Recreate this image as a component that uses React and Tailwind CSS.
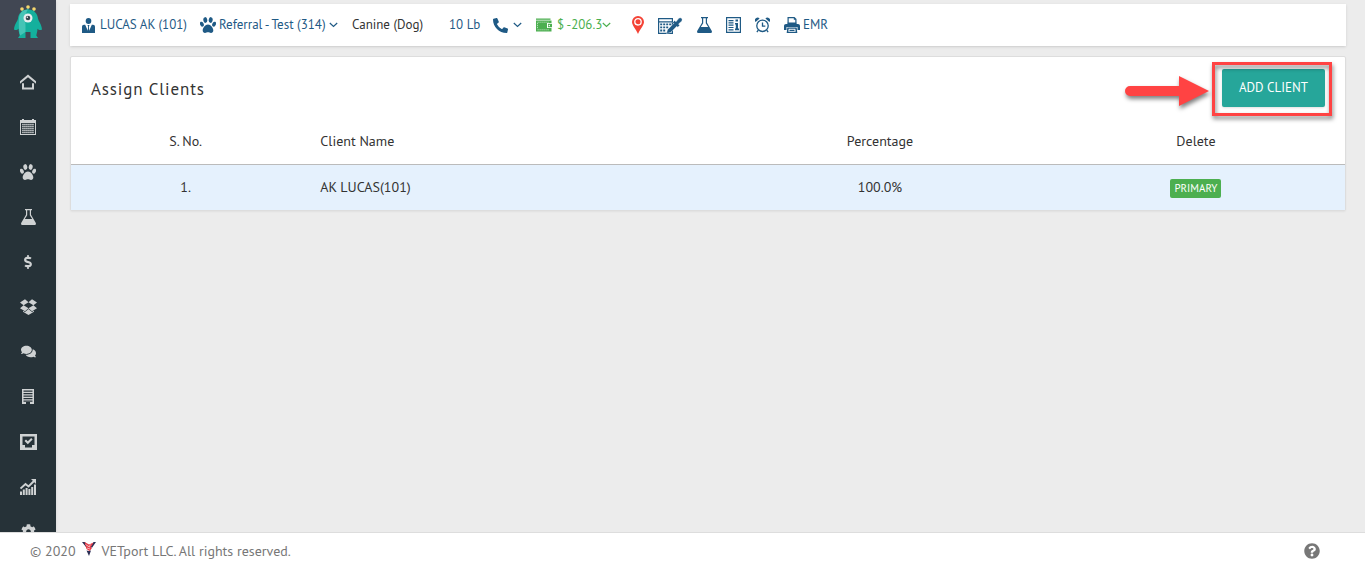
import {
  FaDollarSign,
  FaComments,
  FaCog,
  FaPhoneAlt,
  FaQuestionCircle,
} from "react-icons/fa";

const HomeIcon = () => (
  <svg width="16" height="16" viewBox="0 0 16 16" fill="currentColor">
    <path d="M8 0.5 0 7.3v2.5l8-6.500 8 6.500V7.300z" />
    <path d="M2 9.200h2v4.300h8V9.200h2v6.300H2z" />
  </svg>
);

const CalendarIcon = () => (
  <svg width="16" height="16" viewBox="0 0 16 16" fill="currentColor">
    <path
      fillRule="evenodd"
      d="M0 1h2V0h2v1h8V0h2v1h2v15H0zM1 4v11h14V4z"
    />
    {[5, 7, 9, 11, 13].map((y) =>
      [2, 4, 6, 8, 10, 12].map((x) => (
        <rect key={`${x}-${y}`} x={x + 0.2} y={y - 0.2} width="1.5" height="1.4" />
      )),
    )}
  </svg>
);

const PawIcon = () => (
  <svg width="16" height="16" viewBox="0 0 16 16" fill="currentColor">
    <ellipse cx="5.300" cy="3" rx="2" ry="2.900" transform="rotate(-8 5.300 3)" />
    <ellipse cx="10.700" cy="3" rx="2" ry="2.900" transform="rotate(8 10.700 3)" />
    <ellipse cx="1.900" cy="7.200" rx="1.800" ry="2.600" transform="rotate(-22 1.900 7.200)" />
    <ellipse cx="14.100" cy="7.200" rx="1.800" ry="2.600" transform="rotate(22 14.100 7.200)" />
    <path d="M8 7.500c2.700 0 5.300 3.400 5.300 6 0 1.600-1 2.400-2.300 2.400-1.200 0-1.800-.7-3-.7s-1.800.7-3 .7c-1.300 0-2.300-.8-2.300-2.400 0-2.600 2.600-6 5.300-6z" />
  </svg>
);

const DropboxIcon = () => (
  <svg width="17" height="16" viewBox="0 0 17 16" fill="currentColor">
    <path d="M5 .3 8.500 3.200 3.600 6.200 0 3.400zM12 .3 8.500 3.200l4.900 3L17 3.400zM0 9.200l3.600-2.900 4.900 3L5 12.200zM17 9.200l-3.600-2.900-4.900 3 3.500 2.900z" />
    <path d="m8.500 10 3.500 2.900 2-1.200v1.100L8.500 16 3 12.800v-1.100l2 1.200z" />
  </svg>
);

const BuildingIcon = () => (
  <svg width="12" height="15" viewBox="0 0 12 15" fill="currentColor">
    <path
      fillRule="evenodd"
      d="M0 0h12v15H8v-2H4v2H0zM1.500 1.500v1.200h9V1.500zM1.500 4v1.200h9V4zM1.500 6.500v1.200h9V6.500zM1.500 9v1.200h9V9zM1.500 11.500v1.200h9v-1.200z"
    />
  </svg>
);

const TaskIcon = () => (
  <svg width="17" height="16" viewBox="0 0 17 16" fill="currentColor">
    <path
      fillRule="evenodd"
      d="M0 0h17v16H0zM2.500 2.500v8.500H5v2.500h7V11h2.500V2.500z"
    />
    <path d="M4.500 7 6 5.500l1.800 1.800L11.200 4l1.400 1.400-4.800 4.800z" />
  </svg>
);

const ChartIcon = () => (
  <svg width="16" height="16" viewBox="0 0 16 16" fill="currentColor">
    <path d="M0 12.500h2V16H0zM2.800 10.500h2V16h-2zM5.600 9h2v7h-2zM8.400 10h2v6h-2zM11.200 8h2v8h-2zM14 5.500h2V16h-2z" />
    <path
      d="M0.500 9.500 5.500 5l3 2.400L14 2"
      fill="none"
      stroke="currentColor"
      strokeWidth="1.900"
    />
    <path d="M11 0h5v5z" />
  </svg>
);

const PersonIcon = () => (
  <svg width="13" height="15" viewBox="0 0 13 15" fill="currentColor">
    <ellipse cx="6.500" cy="3" rx="2.800" ry="3" />
    <path d="M0 9c0-1.500.8-2.300 2-2.300h1.200l2.600 6 .3-4L5.500 7h2l-.6 1.700.3 4 2.600-6H11c1.200 0 2 .8 2 2.300v6H0z" />
  </svg>
);

const WalletIcon = () => (
  <svg width="16" height="14" viewBox="0 0 16 14" fill="currentColor">
    <path d="M0 .5h14.500V1.800H0z" />
    <path
      fillRule="evenodd"
      d="M0 2.500h15.500V5H11v5h4.500v3.500H0z"
    />
    <path d="M12 5.800h4v3.400h-4z" />
    <circle cx="13.300" cy="7.500" r="0.700" fill="#fff" />
    <path
      d="M1.500 4.200h12M1.500 11.800h12M1.500 5v6"
      fill="none"
      stroke="#fff"
      strokeWidth="0.600"
      strokeDasharray="1.200 0.800"
    />
  </svg>
);

const PinIcon = () => (
  <svg width="12" height="18" viewBox="0 0 12 18">
    <path
      d="M6 0a6 6 0 0 0-6 6c0 3.400 4 7 6 12 2-5 6-8.600 6-12a6 6 0 0 0-6-6z"
      fill="#f44336"
    />
    <circle cx="6" cy="5.800" r="3.200" fill="none" stroke="#fff" strokeWidth="1.300" />
  </svg>
);

const EstimateIcon = () => (
  <svg width="25" height="17" viewBox="0 0 25 17" fill="currentColor">
    <path
      fillRule="evenodd"
      d="M0 1h15v16H0zM1.200 2.200v2h12.600v-2zM1.200 5.500v10.300h12.600V5.500z"
    />
    <path d="M2.200 6.500h2v1.800h-2zM5.200 6.500h2v1.800h-2zM8.200 6.500h2v1.800h-2zM11.200 6.500h2v1.800h-2zM2.200 9.500h2v1.800h-2zM5.200 9.500h2v1.800h-2zM8.200 9.500h2v1.800h-2zM2.200 12.500h2v2h-2zM5.200 12.500h2v2h-2z" />
    <path
      d="m8.500 16.500 1-3.800 6.200-6.200-1-1.100 2-1.900 1.300 1.300 2.600-3.200c2-2 4.700.5 3 2.600l-3.100 2.800 1.200 1.300-1.900 2-1-1-6.200 6.200z"
      stroke="#fff"
      strokeWidth="0.400"
    />
  </svg>
);

const BeakerIcon = () => (
  <svg width="15" height="16" viewBox="0 0 15 16" fill="currentColor">
    <path
      fillRule="evenodd"
      d="M4 0h7v1.200h-1v4.600l4.700 8c.6 1.100 0 2.200-1.200 2.200h-12C.3 16-.3 14.900.3 13.800l4.700-8V1.200H4zM6.200 1.200v5L3.800 10h7.400L8.800 6.200v-5z"
    />
  </svg>
);

const NewsIcon = () => (
  <svg width="15" height="16" viewBox="0 0 15 16" fill="currentColor">
    <path fillRule="evenodd" d="M0 0h15v16H0zM1.200 1.200v13.600h12.600V1.200z" />
    <path d="M2.500 3h5v1.200h-5zM2.500 5.300h5v1.200h-5zM2.500 7.600h5v1.200h-5zM2.500 9.900h5v1.200h-5zM2.500 12.200h5v1.200h-5z" />
    <path d="M9.500 2.500h2.500v2H9.500zM9 6h3v5.500h1v1.700H9v-1.700h.8v-4H9z" />
  </svg>
);

const AlarmIcon = () => (
  <svg
    width="15"
    height="16"
    viewBox="0 0 16 16"
    fill="none"
    stroke="currentColor"
    strokeWidth="1.400"
  >
    <circle cx="8" cy="8.800" r="6.100" />
    <path d="M8 5.200v3.900h3M3.500 13.500 2 15.600M12.500 13.500l1.500 2.100" />
    <path
      d="M.6 4.700A2.800 2.800 0 0 1 4.900 1.100zM15.400 4.700a2.800 2.800 0 0 0-4.300-3.600z"
      fill="currentColor"
      stroke="none"
    />
  </svg>
);

const PrinterIcon = () => (
  <svg width="16" height="16" viewBox="0 0 16 16" fill="currentColor">
    <path
      fillRule="evenodd"
      d="M3.500 0h7L12.500 2v5h-9zM4.700 1.200v5h6.600V2.800H9.800V1.200z"
    />
    <path d="M3.700 5.500h8.600V7H14c1.200 0 2 .8 2 2v4h-2.500v-3h-11v3H0V9c0-1.200.8-2 2-2h1.700z" />
    <path
      fillRule="evenodd"
      d="M3.300 10.500h9.400l.6 5.500H2.700zM4.700 11.700l-.4 3.100h7.400l-.4-3.100zM5.500 12.700h5v1.200h-5z"
    />
  </svg>
);

const Chevron = () => (
  <svg
    width="9"
    height="6"
    viewBox="0 0 9 6"
    fill="none"
    stroke="currentColor"
    strokeWidth="1.200"
  >
    <path d="m.8 1 3.700 3.500L8.200 1" />
  </svg>
);

const MonsterLogo = () => (
  <svg width="30" height="34" viewBox="0 0 30 34">
    <path
      d="M9.500 7 9 4M15 5V2M20.500 7 21 4"
      stroke="#26a69a"
      strokeWidth="1.200"
    />
    <circle cx="9" cy="4" r="1.800" fill="#f5d76e" />
    <circle cx="15" cy="2" r="1.800" fill="#f5d76e" />
    <circle cx="21" cy="4" r="1.800" fill="#f5d76e" />
    <path
      d="M15 4.500c-6 0-9.500 4-10 9-.5 3-3.500 5-4 11 1.500 1 3.500.6 4.500-.8 0 3 1 5 1.200 6.800L5 33h7.500v-6h5v6H25l-1.700-2.500c.2-1.800 1.200-3.800 1.200-6.800 1 1.400 3 1.800 4.500.8-.5-6-3.500-8-4-11-.5-5-4-9-10-9z"
      fill="#14b09d"
    />
    <path
      d="M15 4.500c-6 0-8.500 4-9 9-.3 3-.5 12.500 1.200 17L12.500 27v-6c0-6-1-12 2.500-16.500z"
      fill="#45c4b6"
    />
    <circle cx="15" cy="13" r="4.500" fill="#e8eef0" />
    <circle cx="15" cy="13" r="2.300" fill="#37474f" />
    <circle cx="14.300" cy="12.300" r="0.700" fill="#fff" />
  </svg>
);

const VetportLogo = () => (
  <svg width="14" height="14" viewBox="0 0 14 14">
    <path d="M0 0h3l2.500 4L4 5zM14 0h-2.500L8.500 5l1.500.8zM4.500 8.500l2 .5 2.500-.5-2 5.500z" fill="#2b2f55" />
    <path d="M2.500 0 7 2.500 11.500.5 9 5l.8 1.500L7.500 9 4.500 7z" fill="#e53945" />
    <path d="m3.500 2.500 4 2.500M5 6l3 1M8.500 2.500 7 5" stroke="#fff" strokeWidth="0.600" />
  </svg>
);

const navItems = [
  { label: "Home", icon: <HomeIcon /> },
  { label: "Calendar", icon: <CalendarIcon /> },
  { label: "Patients", icon: <PawIcon /> },
  { label: "Lab", icon: <BeakerIcon /> },
  { label: "Billing", icon: <FaDollarSign size={14} /> },
  { label: "Inventory", icon: <DropboxIcon /> },
  { label: "Messages", icon: <FaComments size={15} /> },
  { label: "Facility", icon: <BuildingIcon /> },
  { label: "Tasks", icon: <TaskIcon /> },
  { label: "Reports", icon: <ChartIcon /> },
  { label: "Settings", icon: <FaCog size={15} /> },
];

const clients = [
  { id: 101, name: "AK LUCAS(101)", percentage: "100.0%", primary: true },
];

const Sidebar = () => (
  <nav className="w-14 shrink-0 overflow-hidden bg-[#263238] text-[#cfd2d3] shadow">
    <a
      href="#"
      aria-label="Dashboard"
      className="flex h-[50px] justify-center bg-[#414753] pt-[5px]"
    >
      <MonsterLogo />
    </a>
    <ul className="pt-[9px]">
      {navItems.map((item) => (
        <li key={item.label}>
          <a
            href="#"
            aria-label={item.label}
            className="flex h-[45px] items-center justify-center"
          >
            {item.icon}
          </a>
        </li>
      ))}
    </ul>
  </nav>
);

const PatientBar = () => (
  <header className="flex h-[42px] items-center bg-white pl-3 whitespace-nowrap text-[#1f5a85] shadow">
    <a href="#" className="flex w-[118px] items-center gap-[5px]">
      <PersonIcon />
      LUCAS AK (101)
    </a>
    <button type="button" className="flex w-[152px] items-center gap-[3px]">
      <PawIcon />
      Referral - Test (314)
      <Chevron />
    </button>
    <span className="w-[97px] text-[#333]">Canine (Dog)</span>
    <a href="#" className="w-11">
      10 Lb
    </a>
    <button
      type="button"
      aria-label="Call"
      className="flex w-[43px] items-center gap-[5px]"
    >
      <FaPhoneAlt size={15} className="-scale-x-100 rotate-90" />
      <Chevron />
    </button>
    <button
      type="button"
      className="flex w-24 items-center gap-[5px] text-[#4caf50]"
    >
      <WalletIcon />
      <span className="flex items-center">
        $ -206.3
        <Chevron />
      </span>
    </button>
    <div className="flex items-center gap-[14px]">
      <a href="#" aria-label="Location">
        <PinIcon />
      </a>
      <a href="#" aria-label="Estimate">
        <EstimateIcon />
      </a>
      <a href="#" aria-label="Lab">
        <BeakerIcon />
      </a>
      <a href="#" aria-label="Records">
        <NewsIcon />
      </a>
      <a href="#" aria-label="Reminders">
        <AlarmIcon />
      </a>
      <a href="#" className="flex items-center gap-[3px]">
        <PrinterIcon />
        EMR
      </a>
    </div>
  </header>
);

// red box and arrow pointing at the button
const Highlight = () => (
  <>
    <span className="pointer-events-none absolute -top-[7px] -right-[7px] -bottom-[9px] -left-[10px] border-3 border-[#ff4343] drop-shadow-[1px_3px_2px_rgba(0,0,0,0.5)]" />
    <svg
      width="84"
      height="32"
      viewBox="0 0 84 32"
      className="pointer-events-none absolute top-1.5 right-full mr-[13px] drop-shadow-[1px_3px_2px_rgba(0,0,0,0.5)]"
    >
      <path d="M5 11h49V1l30 15-30 15V21H5a5 5 0 0 1 0-10z" fill="#ff4343" />
    </svg>
  </>
);

const AssignClients = () => (
  <section className="rounded-xs border border-[#ddd] bg-white text-sm shadow-xs">
    <div className="flex items-start justify-between px-5 pt-3">
      <h1 className="pt-2 text-[17px] leading-6 tracking-wider text-[#333]">
        Assign Clients
      </h1>
      <div className="relative">
        <button
          type="button"
          className="h-[38px] w-[103px] rounded-xs bg-[#26a69a] text-[13px] text-white shadow-sm"
        >
          ADD CLIENT
        </button>
        <Highlight />
      </div>
    </div>
    <table className="mt-3 w-full table-fixed text-[#333]">
      <thead>
        <tr className="h-[45px] border-b border-[#bbb]">
          <th className="w-[18%] font-normal">S. No.</th>
          <th className="pl-5 text-left font-normal">Client Name</th>
          <th className="w-[26.2%] font-normal">Percentage</th>
          <th className="w-[23.4%] font-normal">Delete</th>
        </tr>
      </thead>
      <tbody>
        {clients.map((client, index) => (
          <tr key={client.id} className="h-[46px] bg-[#e5f1fd]">
            <td className="text-center">{index + 1}.</td>
            <td className="pl-5">{client.name}</td>
            <td className="text-center">{client.percentage}</td>
            <td className="text-center">
              {client.primary && (
                <span className="inline-block rounded-xs bg-[#4caf50] px-1 text-[11px] leading-[19px] font-medium text-white">
                  PRIMARY
                </span>
              )}
            </td>
          </tr>
        ))}
      </tbody>
    </table>
  </section>
);

const Footer = () => (
  <footer className="flex h-[37px] shrink-0 items-center justify-between border-t border-[#ddd] bg-white pr-[45px] pl-[30px] text-sm text-[#777]">
    <p className="flex items-baseline gap-1.5">
      © 2020 <VetportLogo />
      <span>VETport LLC. All rights reserved.</span>
    </p>
    <button type="button" aria-label="Help">
      <FaQuestionCircle size={16} />
    </button>
  </footer>
);

const App = () => {
  return (
    <div className="flex h-screen flex-col bg-[#ececec] font-['PT_Sans','Lato',sans-serif] text-[13px] leading-5">
      <div className="flex min-h-0 flex-1">
        <Sidebar />
        <main className="flex min-w-0 flex-1 flex-col gap-2.5 overflow-hidden pt-1 pr-[19px] pl-3.5">
          <PatientBar />
          <AssignClients />
        </main>
      </div>
      <Footer />
    </div>
  );
};

export default App;
